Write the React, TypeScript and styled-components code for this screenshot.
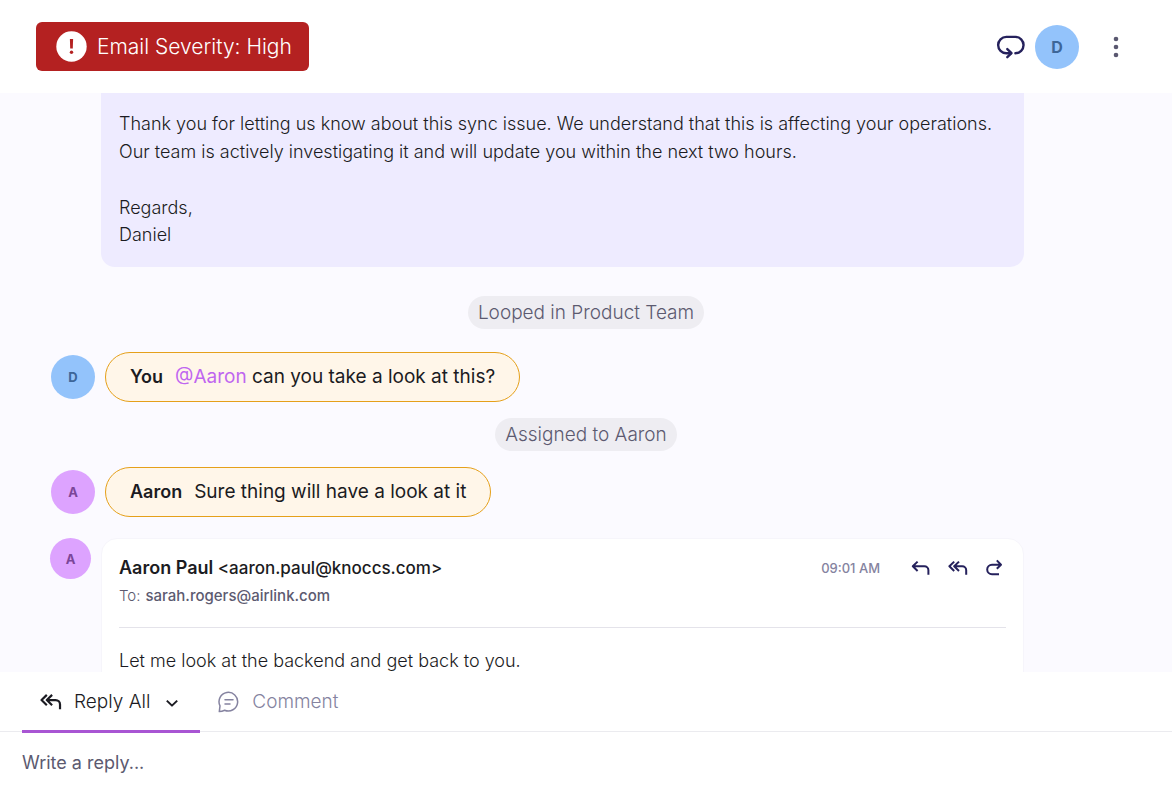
import React from "react";
import styled, { createGlobalStyle } from "styled-components";

const GlobalStyle = createGlobalStyle`
  *, *::before, *::after { box-sizing: border-box; }
  body {
    margin: 0;
    background: #ffffff;
    color: #1b1b22;
    font-family: Inter, "Liberation Sans", sans-serif;
    font-size: 18px;
    font-weight: 300;
  }
  p { margin: 0; }
`;

const Page = styled.div`
  display: flex;
  flex-direction: column;
  height: 100vh;
  overflow: hidden;
`;

const Header = styled.header`
  display: flex;
  align-items: center;
  justify-content: space-between;
  flex: none;
  padding: 22px 36px;
  background: #ffffff;
`;

const Severity = styled.div`
  display: flex;
  align-items: center;
  gap: 10px;
  padding: 9px 17px 9px 20px;
  border-radius: 6px;
  background: #b42121;
  color: #ffffff;
  font-size: 21px;
  line-height: 31px;
`;

const HeaderActions = styled.div`
  display: flex;
  align-items: center;
`;

const IconButton = styled.button`
  display: flex;
  align-items: center;
  justify-content: center;
  padding: 0;
  border: 0;
  background: none;
  color: #25215c;
  cursor: pointer;
`;

const MoreButton = styled(IconButton)`
  width: 40px;
  height: 40px;
  margin-left: 17px;
  color: #5a5870;
`;

const LoopButton = styled(IconButton)`
  margin-right: 9px;
`;

const tones = {
  blue: { background: "#93c3fb", color: "#3d6698" },
  violet: { background: "#dda3ff", color: "#7b4699" },
};

const Avatar = styled.div<{ $tone: keyof typeof tones; $size?: number; $font?: number }>`
  display: flex;
  align-items: center;
  justify-content: center;
  flex: none;
  width: ${(p) => p.$size ?? 44}px;
  height: ${(p) => p.$size ?? 44}px;
  border-radius: 50%;
  background: ${(p) => tones[p.$tone].background};
  color: ${(p) => tones[p.$tone].color};
  font-size: ${(p) => p.$font ?? 13}px;
  font-weight: 700;
`;

const Thread = styled.main`
  flex: 1;
  min-height: 0;
  overflow: hidden;
  background: #fbfaff;
`;

const SentMail = styled.article`
  margin: 0 148px 29px 101px;
  padding: 17px 18px 19px;
  border-radius: 0 0 14px 14px;
  background: #eeebff;
  line-height: 28px;
`;

const Paragraph = styled.p`
  & + & { margin-top: 28px; }
`;

const Signature = styled.span`
  display: block;
  line-height: 26px;
`;

const Event = styled.div`
  width: fit-content;
  margin: 0 auto;
  padding: 0 10px;
  border-radius: 17px;
  background: #eeedf2;
  color: #5c5a70;
  font-size: 19px;
  line-height: 33px;
`;

const NoteRow = styled.div<{ $top: number }>`
  display: flex;
  align-items: center;
  gap: 10px;
  margin: ${(p) => p.$top}px 0 16px 51px;
`;

const Note = styled.div`
  display: flex;
  align-items: baseline;
  gap: 12px;
  padding: 9px 24px;
  border: 1px solid #e5a01a;
  border-radius: 25px;
  background: #fff6e9;
  font-size: 19px;
  font-weight: 400;
  line-height: 30px;
`;

const Author = styled.strong`
  font-size: 18px;
  font-weight: 600;
`;

const Mention = styled.a`
  color: #bf66f0;
  text-decoration: none;
`;

const MailRow = styled.div`
  display: flex;
  align-items: flex-start;
  gap: 10px;
  margin: 21px 148px 0 50px;
`;

const Mail = styled.article`
  flex: 1;
  padding: 14px 17px 24px;
  border: 1px solid #f6f5fb;
  border-radius: 16px;
  background: #ffffff;
`;

const MailHead = styled.header`
  display: flex;
  align-items: center;
  line-height: 30px;
`;

const Sender = styled.div`
  flex: 1;
  font-size: 17px;
  font-weight: 500;

  strong { font-size: 18px; font-weight: 600; }
`;

const Time = styled.time`
  margin-right: 31px;
  color: #8583a0;
  font-size: 13px;
  font-weight: 500;
`;

const MailActions = styled.div`
  display: flex;
  align-items: center;
  gap: 17px;
  padding-right: 1px;
`;

const Recipient = styled.div`
  padding-bottom: 18px;
  border-bottom: 1px solid #e4e3ea;
  color: #5c5a70;
  font-size: 15px;
  font-weight: 500;
  line-height: 26px;

  span { margin-right: 5px; font-weight: 300; }
`;

const MailBody = styled.p`
  padding-top: 19px;
  line-height: 28px;
`;

const Composer = styled.footer`
  flex: none;
  background: #ffffff;
`;

const Tabs = styled.div`
  display: flex;
  padding-left: 22px;
  border-bottom: 1px solid #ebebef;
`;

const Tab = styled.button<{ $active?: boolean }>`
  display: flex;
  align-items: center;
  gap: 12px;
  height: 61px;
  margin-bottom: -2px;
  padding: 1px 21px 0 18px;
  border: 0;
  border-bottom: 3px solid ${(p) => (p.$active ? "#a855d3" : "transparent")};
  background: none;
  color: ${(p) => (p.$active ? "#1b1b22" : "#8583a0")};
  font: inherit;
  font-size: 19px;
  cursor: pointer;

  svg:last-child { margin-left: 3px; }
`;

const ReplyInput = styled.input`
  display: block;
  width: 100%;
  height: 55px;
  padding: 6px 22px 0;
  border: 0;
  outline: 0;
  background: none;
  color: #1b1b22;
  font: inherit;
  font-weight: 400;

  &::placeholder { color: #5c5a70; opacity: 1; }
`;

type IconProps = { size?: number };

const strokeProps = {
  fill: "none",
  stroke: "currentColor",
  strokeLinecap: "round" as const,
  strokeLinejoin: "round" as const,
  "aria-hidden": true,
};

const AlertIcon = () => (
  <svg width="31" height="31" viewBox="0 0 31 31" aria-hidden="true">
    <circle cx="15.5" cy="15.5" r="15.2" fill="#fff" />
    <path d="M13.9 8h3.2l-.3 9.6h-2.6z" fill="#b42121" />
    <circle cx="15.5" cy="21.2" r="1.7" fill="#b42121" />
  </svg>
);

const LoopIcon = () => (
  <svg width="30" height="26" viewBox="0 0 30 26" {...strokeProps} strokeWidth="2.4">
    <path d="M19.4 19.2A8.15 8.15 0 0 0 19.4 2.9H10.3a8.15 8.15 0 0 0 0 16.3H15" />
    <path d="M11.3 15.1l4.2 4.1-4.2 4" />
  </svg>
);

const MoreIcon = () => (
  <svg width="6" height="22" viewBox="0 0 6 22" fill="currentColor" aria-hidden="true">
    <circle cx="3" cy="3" r="2.3" />
    <circle cx="3" cy="11" r="2.3" />
    <circle cx="3" cy="19" r="2.3" />
  </svg>
);

const ReplyIcon = () => (
  <svg width="20" height="18" viewBox="0 0 20 18" {...strokeProps} strokeLinecap="butt" strokeWidth="2">
    <path d="M6.6 2.6L1.8 7.3l4.8 4.7M2 7.3h11.4a4 4 0 0 1 4 4v4.4" />
  </svg>
);

const ReplyAllIcon = ({ size = 20 }: IconProps) => (
  <svg width={size} height={(size * 9) / 10} viewBox="0 0 20 18" {...strokeProps} strokeLinecap="butt" strokeWidth="2">
    <path d="M6.2 2.6L1.4 7.3l4.8 4.7M11 2.6L6.2 7.3l4.8 4.7M6.4 7.3h7.8a4 4 0 0 1 4 4v4.4" />
  </svg>
);

const ForwardIcon = () => (
  <svg width="20" height="18" viewBox="0 0 20 18" {...strokeProps} strokeLinecap="butt" strokeWidth="2">
    <path d="M11.8 1.4L16 5.7l-4.2 4.1M15.8 5.7H7a4.8 4.8 0 0 0 0 9.6H14" />
  </svg>
);

const ChevronIcon = () => (
  <svg width="14" height="14" viewBox="0 0 14 14" {...strokeProps} strokeLinecap="butt" strokeWidth="2">
    <path d="M1.8 5.6L7 10.6l5.2-5" />
  </svg>
);

const CommentIcon = () => (
  <svg width="22" height="22" viewBox="0 0 22 22" {...strokeProps} strokeWidth="1.5">
    <path d="M1.3 20.6L2 14.8A9.3 9.3 0 1 1 6.6 19.2Q4 20.4 1.3 20.6z" />
    <path d="M7 8.8h8M7 13h5" />
  </svg>
);

export default function App() {
  return (
    <Page>
      <GlobalStyle />
      <Header>
        <Severity>
          <AlertIcon />
          Email Severity: High
        </Severity>
        <HeaderActions>
          <LoopButton type="button" aria-label="Loop in">
            <LoopIcon />
          </LoopButton>
          <Avatar $tone="blue" $font={16}>D</Avatar>
          <MoreButton type="button" aria-label="More options">
            <MoreIcon />
          </MoreButton>
        </HeaderActions>
      </Header>

      <Thread>
        <SentMail>
          <Paragraph>
            Thank you for letting us know about this sync issue. We understand that this is affecting your operations.
            <br />
            Our team is actively investigating it and will update you within the next two hours.
          </Paragraph>
          <Paragraph>
            Regards,
            <Signature>Daniel</Signature>
          </Paragraph>
        </SentMail>

        <Event>Looped in Product Team</Event>
        <NoteRow $top={23}>
          <Avatar $tone="blue">D</Avatar>
          <Note>
            <Author>You</Author>
            <span>
              <Mention href="#aaron">@Aaron</Mention> can you take a look at this?
            </span>
          </Note>
        </NoteRow>

        <Event>Assigned to Aaron</Event>
        <NoteRow $top={16}>
          <Avatar $tone="violet">A</Avatar>
          <Note>
            <Author>Aaron</Author>
            <span>Sure thing will have a look at it</span>
          </Note>
        </NoteRow>

        <MailRow>
          <Avatar $tone="violet" $size={41}>A</Avatar>
          <Mail>
            <MailHead>
              <Sender>
                <strong>Aaron Paul</strong> &lt;aaron.paul@knoccs.com&gt;
              </Sender>
              <Time>09:01 AM</Time>
              <MailActions>
                <IconButton type="button" aria-label="Reply">
                  <ReplyIcon />
                </IconButton>
                <IconButton type="button" aria-label="Reply all">
                  <ReplyAllIcon />
                </IconButton>
                <IconButton type="button" aria-label="Forward">
                  <ForwardIcon />
                </IconButton>
              </MailActions>
            </MailHead>
            <Recipient>
              <span>To:</span>sarah.rogers@airlink.com
            </Recipient>
            <MailBody>Let me look at the backend and get back to you.</MailBody>
          </Mail>
        </MailRow>
      </Thread>

      <Composer>
        <Tabs>
          <Tab type="button" $active>
            <ReplyAllIcon size={22} />
            Reply All
            <ChevronIcon />
          </Tab>
          <Tab type="button">
            <CommentIcon />
            <span>Comment</span>
          </Tab>
        </Tabs>
        <ReplyInput type="text" aria-label="Write a reply" placeholder="Write a reply..." />
      </Composer>
    </Page>
  );
}
